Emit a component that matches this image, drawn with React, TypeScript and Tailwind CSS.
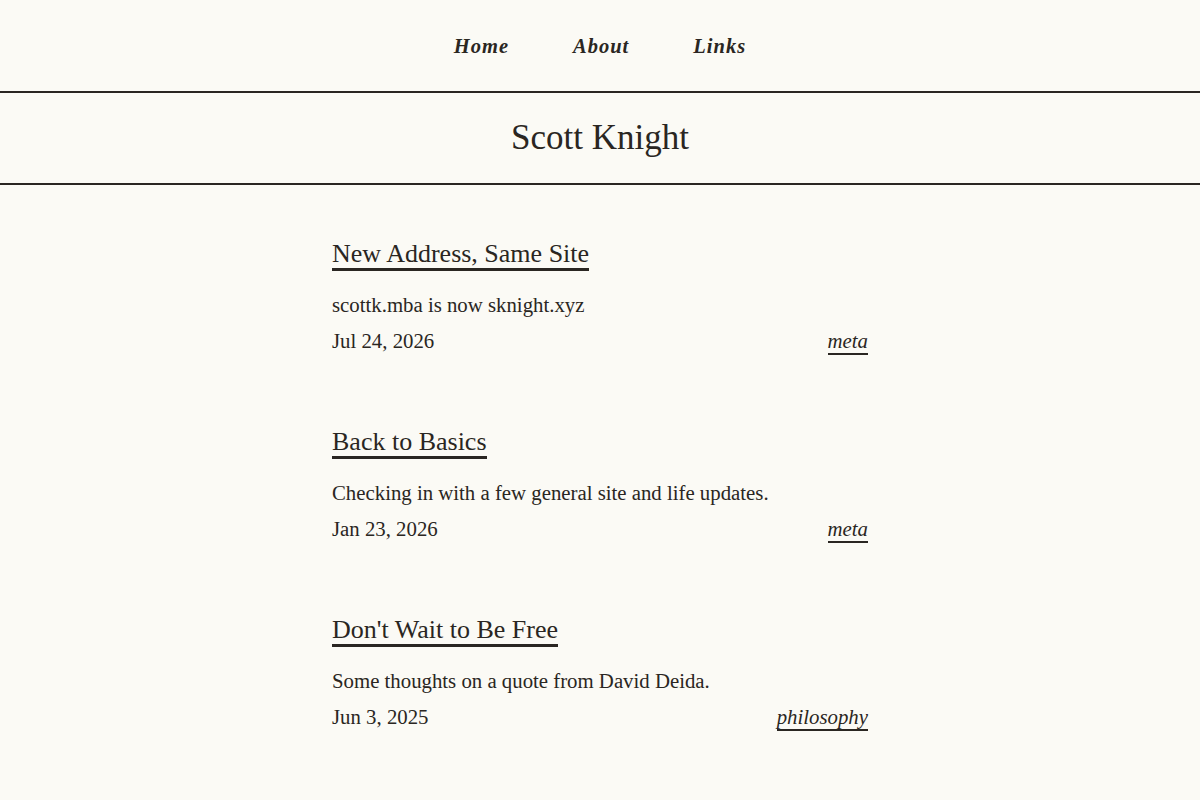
import React from "react";

const posts = [
  { title: "New Address, Same Site", desc: "scottk.mba is now sknight.xyz", date: "Jul 24, 2026", tag: "meta" },
  { title: "Back to Basics", desc: "Checking in with a few general site and life updates.", date: "Jan 23, 2026", tag: "meta" },
  { title: "Don't Wait to Be Free", desc: "Some thoughts on a quote from David Deida.", date: "Jun 3, 2025", tag: "philosophy" },
];

export default function App() {
  return (
    <div
      className="min-h-[800px] bg-[#fbfaf5] text-[#2a2622]"
      style={{ fontFamily: '"Liberation Serif", "Times New Roman", serif' }}
    >
      <nav className="h-[91px] flex items-center justify-center gap-[64px] pt-[1px]">
        {["Home", "About", "Links"].map((l) => (
          <a key={l} className="text-[20.5px] font-bold italic tracking-[1px] leading-none">
            {l}
          </a>
        ))}
      </nav>
      <header className="border-y-2 border-[#2a2622] h-[94px] flex items-center justify-center">
        <h1 className="text-[35px] leading-none pb-[1px]">Scott Knight</h1>
      </header>
      <main className="w-[536px] mx-auto pt-[55px] flex flex-col gap-[73px]">
        {posts.map((p) => (
          <article key={p.title} className="flex flex-col">
            <div>
              <h2 className="inline-block text-[26px] leading-[28px] border-b-[3px] border-[#2a2622]">
                {p.title}
              </h2>
            </div>
            <p className="text-[20.8px] leading-[28px] mt-[20px]">{p.desc}</p>
            <div className="flex justify-between items-baseline mt-[8px] text-[20.8px] leading-[28px]">
              <span>{p.date}</span>
              <a className="italic border-b-2 border-[#2a2622] leading-[24px]">{p.tag}</a>
            </div>
          </article>
        ))}
      </main>
    </div>
  );
}
